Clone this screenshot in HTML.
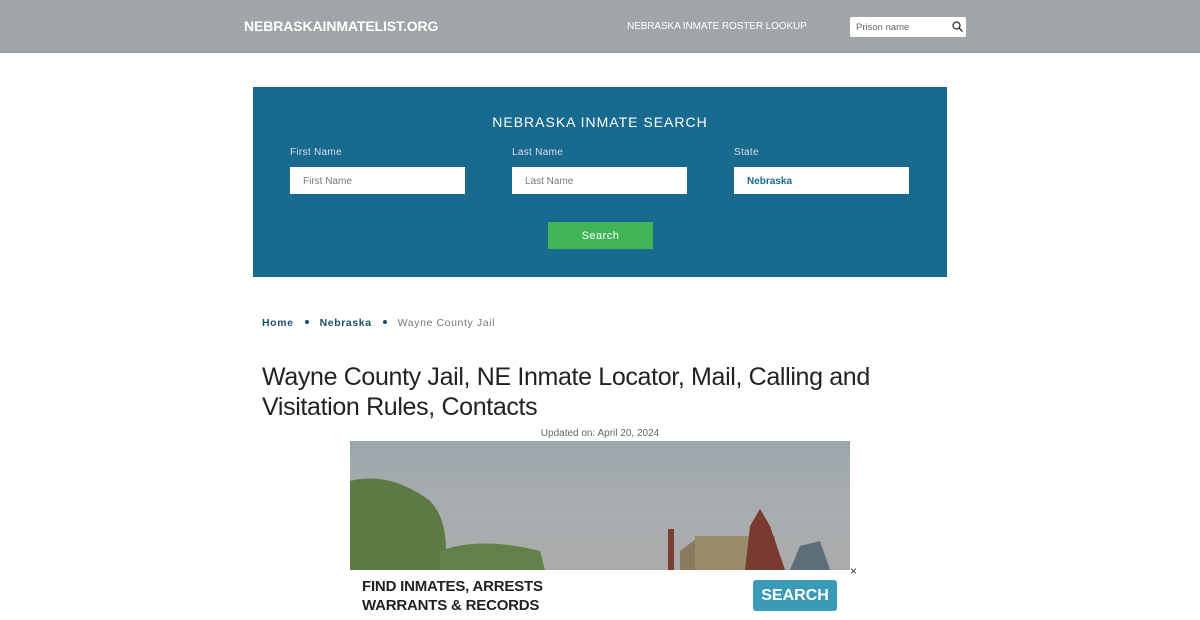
<!DOCTYPE html>
<html><head><meta charset="utf-8"><style>
*{margin:0;padding:0;box-sizing:border-box}
body{width:1200px;height:620px;overflow:hidden;background:#fff;font-family:"Liberation Sans",sans-serif;position:relative}
.hdr{position:absolute;left:0;top:0;width:1200px;height:53px;background:#a0a5a7;border-bottom:2px solid #979c9e}
.logo{position:absolute;left:244px;top:18px;color:#fff;font-weight:bold;font-size:14px;letter-spacing:-0.1px}
.nav{position:absolute;left:627px;top:21px;color:#fff;font-size:10px;letter-spacing:-0.1px}
.ps{position:absolute;left:850px;top:17px;width:116px;height:20px;background:#fff;border-radius:2px;font-size:9.5px;color:#666;padding:5px 6px}
.box{position:absolute;left:253px;top:87px;width:694px;height:190px;background:#186a8e}
.box h2{position:absolute;top:27px;width:100%;text-align:center;color:#fff;font-weight:normal;font-size:14px;letter-spacing:1px}
.lbl{position:absolute;top:60px;color:#dde;font-size:10px;letter-spacing:.3px}
.inp{position:absolute;top:80px;width:175px;height:27px;background:#fff;font-size:10px;color:#777;padding:9px 13px}
.btn{position:absolute;left:295px;top:135px;width:105px;height:27px;background:#3fb558;color:#fff;font-size:11px;text-align:center;line-height:28px;letter-spacing:.5px}
.bc{position:absolute;left:262px;top:317px;font-size:10.5px;letter-spacing:.6px;font-weight:bold;color:#1f4e6b}
.bc span.d{display:inline-block;width:4px;height:4px;background:#1f4e6b;border-radius:50%;margin:0 11px 2px}
.bc .g{color:#777;font-weight:normal}
h1{position:absolute;left:262px;top:362px;width:650px;font-weight:normal;font-size:25px;line-height:30px;color:#222;letter-spacing:-0.35px}
.upd{position:absolute;left:0;width:1200px;top:428px;text-align:center;font-size:10px;color:#666}
.img{position:absolute;left:350px;top:441px;width:500px;height:129px;background:linear-gradient(#9ca7ac,#a9adaf 60%,#aaa)}
.ad{position:absolute;left:350px;top:570px;width:500px;height:50px;background:#fff}
.ad .t{position:absolute;left:12px;top:7px;font-weight:bold;font-size:15px;line-height:19px;color:#222;letter-spacing:-0.2px}
.ad .s{position:absolute;left:403px;top:10px;width:84px;height:31px;background:#3a9ab8;border-radius:3px;color:#fff;font-weight:bold;font-size:16px;text-align:center;line-height:31px}
</style></head><body>
<div class="hdr"><div class="logo">NEBRASKAINMATELIST.ORG</div><div class="nav">NEBRASKA INMATE ROSTER LOOKUP</div>
<div class="ps">Prison name<svg style="position:absolute;right:3px;top:4px" width="11" height="11" viewBox="0 0 11 11"><circle cx="4.5" cy="4.5" r="3.5" fill="none" stroke="#333" stroke-width="1.3"/><path d="M7 7l3.5 3.5" stroke="#333" stroke-width="1.3"/></svg></div></div>
<div class="box"><h2>NEBRASKA INMATE SEARCH</h2>
<div class="lbl" style="left:37px">First Name</div><div class="lbl" style="left:259px">Last Name</div><div class="lbl" style="left:481px">State</div>
<div class="inp" style="left:37px">First Name</div><div class="inp" style="left:259px">Last Name</div><div class="inp" style="left:481px;color:#186a8e;font-weight:bold">Nebraska</div>
<div class="btn">Search</div></div>
<div class="bc">Home<span class="d"></span>Nebraska<span class="d"></span><span class="g">Wayne County Jail</span></div>
<h1>Wayne County Jail, NE Inmate Locator, Mail, Calling and Visitation Rules, Contacts</h1>
<div class="upd">Updated on: April 20, 2024</div>
<div class="img"><svg width="500" height="129"><path d="M0 40 Q40 30 80 60 Q100 80 95 129 L0 129Z" fill="#5d7a45"/><path d="M90 110 Q130 95 190 110 L195 129 L90 129Z" fill="#62804a"/><path d="M318 88 h6 v41 h-6z" fill="#7a3d30"/><path d="M330 110 L350 95 L370 129 L330 129Z" fill="#8a7a5f"/><path d="M345 95 h80 v34 h-80z" fill="#9a8a6a"/><path d="M400 85 L410 68 L420 85 L435 129 L395 129Z" fill="#7a3a30"/><path d="M450 105 L470 100 L480 129 L440 129Z" fill="#5d6e78"/></svg></div>
<div class="ad"><div class="t">FIND INMATES, ARRESTS<br>WARRANTS &amp; RECORDS</div><div class="s">SEARCH</div><div style="position:absolute;left:500px;top:-6px;font-size:12px;color:#333">×</div></div>
</body></html>
